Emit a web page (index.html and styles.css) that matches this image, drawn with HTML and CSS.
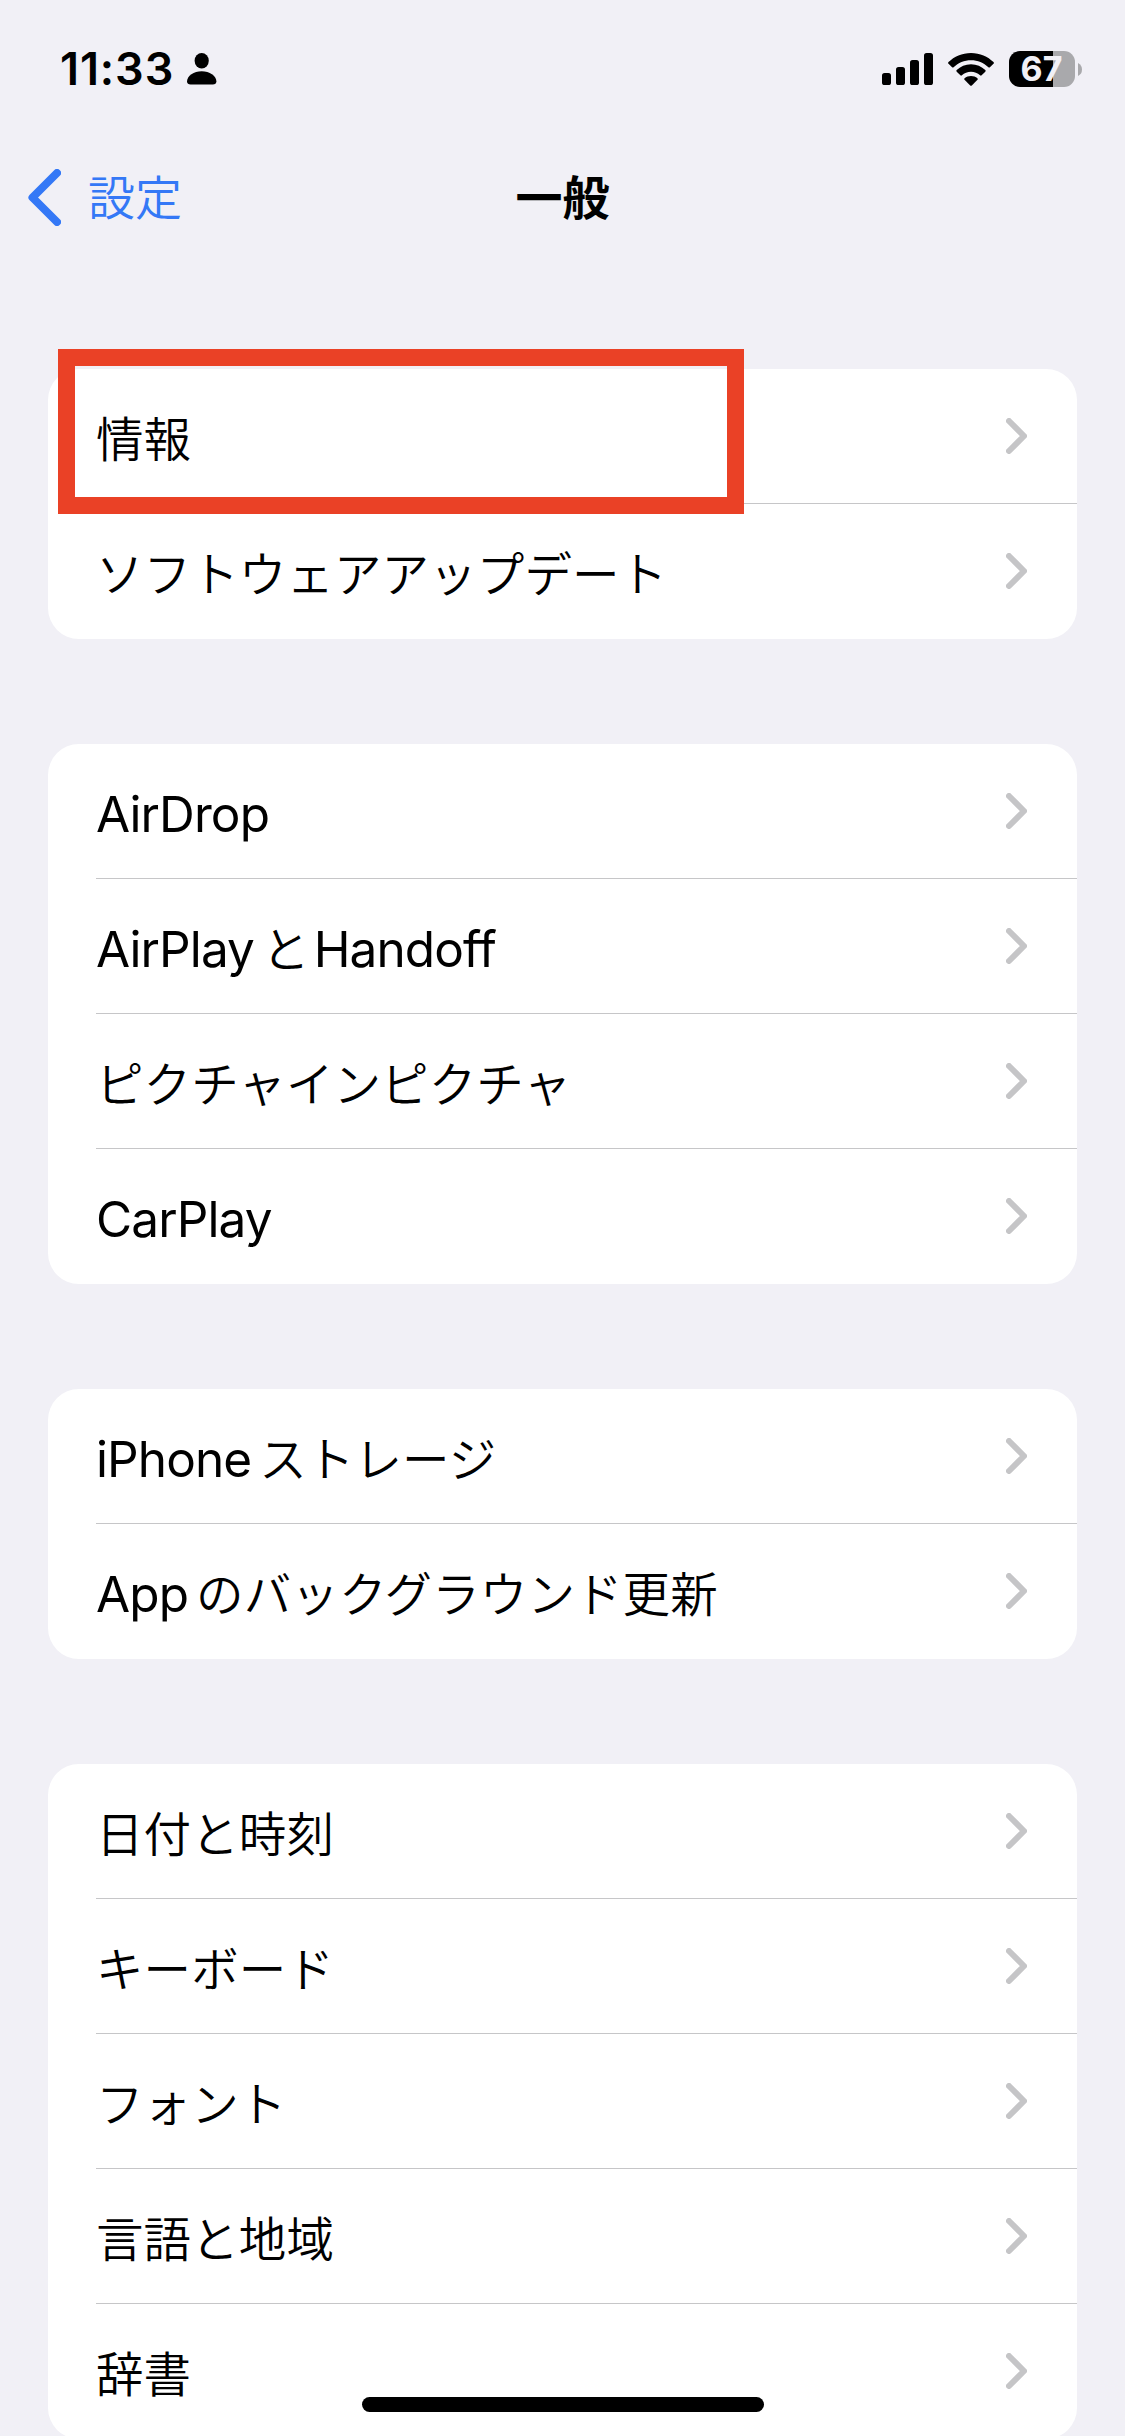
FILE: index.html
```html
<!DOCTYPE html>
<html lang="ja">
<head>
<meta charset="utf-8">
<title>一般</title>
<link rel="stylesheet" href="styles.css">
</head>
<body>
<svg class="defs" width="0" height="0">
  <symbol id="chevron" viewBox="0 0 21 36"><path d="M3 3 L18 18 L3 33" fill="none" stroke="currentColor" stroke-width="6" stroke-linecap="round" stroke-linejoin="round"/></symbol>
</svg>
<div class="screen">
  <header class="status">
    <div class="status-left">
      <span class="time">11:33</span>
      <svg class="person" viewBox="0 0 30 32"><ellipse cx="14.7" cy="7.8" rx="7.1" ry="7.7"/><path d="M14.7 18.2C22.5 18.2 29.4 23 29.4 28.3C29.4 30.4 28 31.5 25.8 31.5H3.6C1.4 31.5 0 30.4 0 28.3C0 23 6.9 18.2 14.7 18.2Z"/></svg>
    </div>
    <div class="status-right">
      <svg class="signal" viewBox="0 0 51 32"><rect y="20" width="9" height="12" rx="2.6"/><rect x="14" y="14" width="9" height="18" rx="2.6"/><rect x="28" y="7" width="9" height="25" rx="2.6"/><rect x="42" y="0" width="9" height="32" rx="2.6"/></svg>
      <svg class="wifi" viewBox="0 0 46 33"><path d="M23 0C32 0 39.8 3.6 45.5 9.1Q46.3 9.9 45.5 10.7L41.9 14.2Q41.2 14.9 40.4 14.2C35.7 9.8 29.7 7.2 23 7.2S10.3 9.8 5.6 14.2Q4.8 14.9 4.1 14.2L.5 10.7Q-.3 9.9 .5 9.1C6.2 3.6 14 0 23 0Z"/><path d="M23 11.3C28.600 11.300 33.600 13.500 37.300 17.100Q38.100 17.900 37.300 18.700L33.600 22.300Q32.900 23 32.100 22.300C29.600 20.200 26.500 18.800 23 18.800S16.400 20.200 13.900 22.300Q13.100 23 12.400 22.300L8.700 18.700Q7.900 17.900 8.700 17.100C12.400 13.500 17.400 11.300 23 11.300Z"/><path d="M23 22.900C25.500 22.900 27.700 23.800 29.400 25.200Q30.200 25.900 29.500 26.700L23.800 32.400Q23 33.100 22.200 32.400L16.500 26.700Q15.800 25.900 16.600 25.200C18.300 23.800 20.500 22.900 23 22.900Z"/></svg>
      <div class="battery"><span class="battery-body">67</span><svg class="nub" viewBox="0 0 4 13"><path d="M0 0Q4 2 4 6.500T0 13Z"/></svg></div>
    </div>
  </header>
  <nav class="nav">
    <div class="back">
      <svg class="back-icon" viewBox="0 0 33 57"><path d="M29 4 L4.500 28.500 L29 53" fill="none" stroke="currentColor" stroke-width="8" stroke-linecap="round" stroke-linejoin="round"/></svg>
      <span class="ja back-label">設定</span>
    </div>
    <h1 class="title">一般</h1>
  </nav>
  <main class="list">
    <section class="group">
      <div class="row"><span class="label"><span class="ja">情報</span></span><svg class="chev"><use href="#chevron"/></svg><div class="highlight"></div></div>
      <div class="row"><span class="label"><span class="ja">ソフトウェアアップデート</span></span><svg class="chev"><use href="#chevron"/></svg></div>
    </section>
    <section class="group">
      <div class="row"><span class="label">AirDrop</span><svg class="chev"><use href="#chevron"/></svg></div>
      <div class="row"><span class="label">AirPlay<span class="ja joined">と</span><span class="handoff">Handoff</span></span><svg class="chev"><use href="#chevron"/></svg></div>
      <div class="row"><span class="label"><span class="ja">ピクチャインピクチャ</span></span><svg class="chev"><use href="#chevron"/></svg></div>
      <div class="row"><span class="label">CarPlay</span><svg class="chev"><use href="#chevron"/></svg></div>
    </section>
    <section class="group">
      <div class="row"><span class="label">iPhone<span class="ja joined">ストレージ</span></span><svg class="chev"><use href="#chevron"/></svg></div>
      <div class="row"><span class="label">App<span class="ja joined">のバックグラウンド更新</span></span><svg class="chev"><use href="#chevron"/></svg></div>
    </section>
    <section class="group">
      <div class="row"><span class="label"><span class="ja">日付と時刻</span></span><svg class="chev"><use href="#chevron"/></svg></div>
      <div class="row"><span class="label"><span class="ja">キーボード</span></span><svg class="chev"><use href="#chevron"/></svg></div>
      <div class="row"><span class="label"><span class="ja">フォント</span></span><svg class="chev"><use href="#chevron"/></svg></div>
      <div class="row"><span class="label"><span class="ja">言語と地域</span></span><svg class="chev"><use href="#chevron"/></svg></div>
      <div class="row"><span class="label"><span class="ja">辞書</span></span><svg class="chev"><use href="#chevron"/></svg></div>
    </section>
  </main>
  <div class="home-indicator"></div>
</div>
</body>
</html>
```
FILE: styles.css
```css
* { box-sizing: border-box; }
body { margin: 0; background: #f1f0f6; }
.defs { position: absolute; }
.screen {
  position: relative;
  width: 1125px;
  height: 2436px;
  overflow: hidden;
  background: #f1f0f6;
  color: #000;
  font-family: Inter, "Noto Sans CJK JP", sans-serif;
}
.status {
  display: flex;
  justify-content: space-between;
  align-items: center;
  height: 138px;
  padding: 0 43px 0 60px;
}
.status-left, .status-right, .battery { display: flex; align-items: center; }
.status-left { gap: 13px; }
.time { font-size: 45px; font-weight: 600; line-height: 60px; letter-spacing: 0.9px; }
.person { width: 30px; height: 32px; }
.signal { width: 51px; height: 32px; margin-right: 15px; }
.wifi { width: 46px; height: 33px; margin-right: 15px; }
.battery { gap: 3px; }
.battery-body {
  width: 66px;
  height: 36px;
  border-radius: 11px;
  background: linear-gradient(to right, #000 44px, #a9a9ac 44px);
  color: #f1f0f6;
  font-size: 34px;
  font-weight: 650;
  line-height: 36px;
  text-align: center;
  text-indent: -1px;
}
.nub { width: 4px; height: 13px; fill: #a9a9ac; }
.nav {
  display: grid;
  grid-template-columns: 1fr auto 1fr;
  align-items: center;
  height: 118px;
  padding: 0 28px;
}
.back { display: flex; align-items: center; gap: 27px; color: #3478f6; }
.back-icon { width: 33px; height: 57px; }
.title {
  margin: 0;
  padding-bottom: 5px;
  font: 700 47px/60px "Noto Sans CJK JP", sans-serif;
}
.ja {
  font-family: "Noto Sans CJK JP", sans-serif;
  font-size: 47.5px;
  font-weight: 350;
  line-height: 1;
}
.back-label { padding-bottom: 5px; font-size: 47px; }
.list {
  display: flex;
  flex-direction: column;
  gap: 105px;
  padding: 113px 48px 0;
}
.group { border-radius: 31px; background: #fff; }
.row {
  position: relative;
  display: flex;
  justify-content: space-between;
  height: 135px;
  margin-left: 48px;
  padding-right: 50px;
  border-bottom: 1px solid #c6c6c8;
}
.row:last-child { border-bottom-color: transparent; }
.label {
  padding-top: 3px;
  font-size: 49.5px;
  line-height: 135px;
  letter-spacing: -0.9px;
  white-space: nowrap;
}
.label .ja { letter-spacing: 0.1px; }
.label .joined { margin-left: 8px; }
.handoff { margin-left: 4px; }
.chev { width: 21px; height: 36px; margin-top: 49px; color: #c5c5c7; }
.highlight {
  position: absolute;
  left: -38.500px;
  top: -20.500px;
  width: 686px;
  height: 165px;
  border: 17px solid #ea4126;
  z-index: 1;
}
.home-indicator {
  position: absolute;
  left: 362px;
  bottom: 24px;
  width: 402px;
  height: 15px;
  border-radius: 8px;
  background: #000;
}
```
